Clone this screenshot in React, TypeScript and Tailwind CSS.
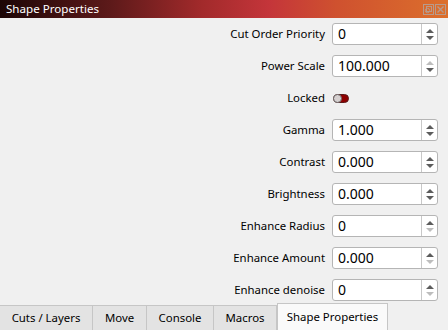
import React from "react";

const FONT = { fontFamily: '"Segoe UI", "Noto Sans", "Open Sans", sans-serif' };

function Spin({ value, upOff = false, downOff = false }: { value: string; upOff?: boolean; downOff?: boolean }) {
  return (
    <div className="flex h-[22px] w-[106px] rounded-[3px] border border-[#b5b5b5] bg-white">
      <div className="flex flex-1 items-center pl-[5px] text-[14px] leading-none text-black">{value}</div>
      <div className="flex w-[16px] flex-col items-center justify-center gap-[3px] border-l border-[#c8c8c8]">
        <svg width="8" height="4" viewBox="0 0 8 4">
          <polygon points="0,4 8,4 4,0" fill={upOff ? "#bdbdbd" : "#5c5c5c"} />
        </svg>
        <svg width="8" height="4" viewBox="0 0 8 4">
          <polygon points="0,0 8,0 4,4" fill={downOff ? "#bdbdbd" : "#5c5c5c"} />
        </svg>
      </div>
    </div>
  );
}

function Row({ label, children }: { label: string; children: React.ReactNode }) {
  return (
    <>
      <div className="flex h-[22px] items-center justify-end text-[11.4px] text-black">{label}</div>
      <div className="flex h-[22px] items-center">{children}</div>
    </>
  );
}

export default function App() {
  const tabs = ["Cuts / Layers", "Move", "Console", "Macros"];
  const widths = ["w-[93px]", "w-[54px]", "w-[67px]", "w-[63px]"];
  return (
    <div className="flex h-[330px] w-[448px] flex-col overflow-hidden bg-[#f0f0f0]" style={FONT}>
      <div className="flex h-[18px] items-center justify-between bg-[linear-gradient(to_right,#1c0606_0%,#5e1a1a_25%,#a22a2b_45%,#c4353a_60%,#cf512f_75%,#dc6f2c_100%)] pl-[6px] pr-[2px]">
        <span className="text-[11.6px] leading-none text-white">Shape Properties</span>
        <div className="flex gap-[1px]">
          <svg width="11" height="11" viewBox="0 0 11 11">
            <rect x="0.5" y="0.5" width="10" height="10" fill="none" stroke="#b89a8a" />
            <rect x="3.5" y="2.5" width="5" height="5" fill="none" stroke="#b89a8a" />
            <circle cx="4.5" cy="6.5" r="2.2" fill="none" stroke="#b89a8a" />
          </svg>
          <svg width="11" height="11" viewBox="0 0 11 11">
            <rect x="0.5" y="0.5" width="10" height="10" fill="none" stroke="#b89a8a" />
            <path d="M2.5 2.5 L8.5 8.5 M8.5 2.5 L2.5 8.5" stroke="#b89a8a" strokeWidth="1.4" />
          </svg>
        </div>
      </div>
      <div className="grid flex-1 grid-cols-[1fr_106px] content-start gap-x-[7px] gap-y-[10px] pr-[10px] pt-[5px]">
        <Row label="Cut Order Priority"><Spin value="0" /></Row>
        <Row label="Power Scale"><Spin value="100.000" upOff /></Row>
        <Row label="Locked">
          <div className="ml-[1px] flex h-[9px] w-[16px] items-center rounded-full border border-[#5a1a1a] bg-[#8e0000]">
            <div className="-ml-[1px] h-[9px] w-[9px] rounded-full border border-[#6a6a6a] bg-[#d6d0d0]" />
          </div>
        </Row>
        <Row label="Gamma"><Spin value="1.000" /></Row>
        <Row label="Contrast"><Spin value="0.000" /></Row>
        <Row label="Brightness"><Spin value="0.000" /></Row>
        <Row label="Enhance Radius"><Spin value="0" downOff /></Row>
        <Row label="Enhance Amount"><Spin value="0.000" downOff /></Row>
        <Row label="Enhance denoise"><Spin value="0" downOff /></Row>
      </div>
      <div className="flex h-[27px] items-end">
        {tabs.map((t, i) => (
          <div
            key={t}
            className={`flex h-[25px] ${widths[i]} items-center justify-center border border-b-0 border-l-0 border-[#c6c6c6] bg-[#e3e3e3] text-[11.4px] text-black`}
          >
            {t}
          </div>
        ))}
        <div className="flex h-[27px] w-[111px] items-center justify-center border border-b-0 border-[#c6c6c6] bg-[#fafafa] text-[11.4px] text-black">
          Shape Properties
        </div>
      </div>
    </div>
  );
}
